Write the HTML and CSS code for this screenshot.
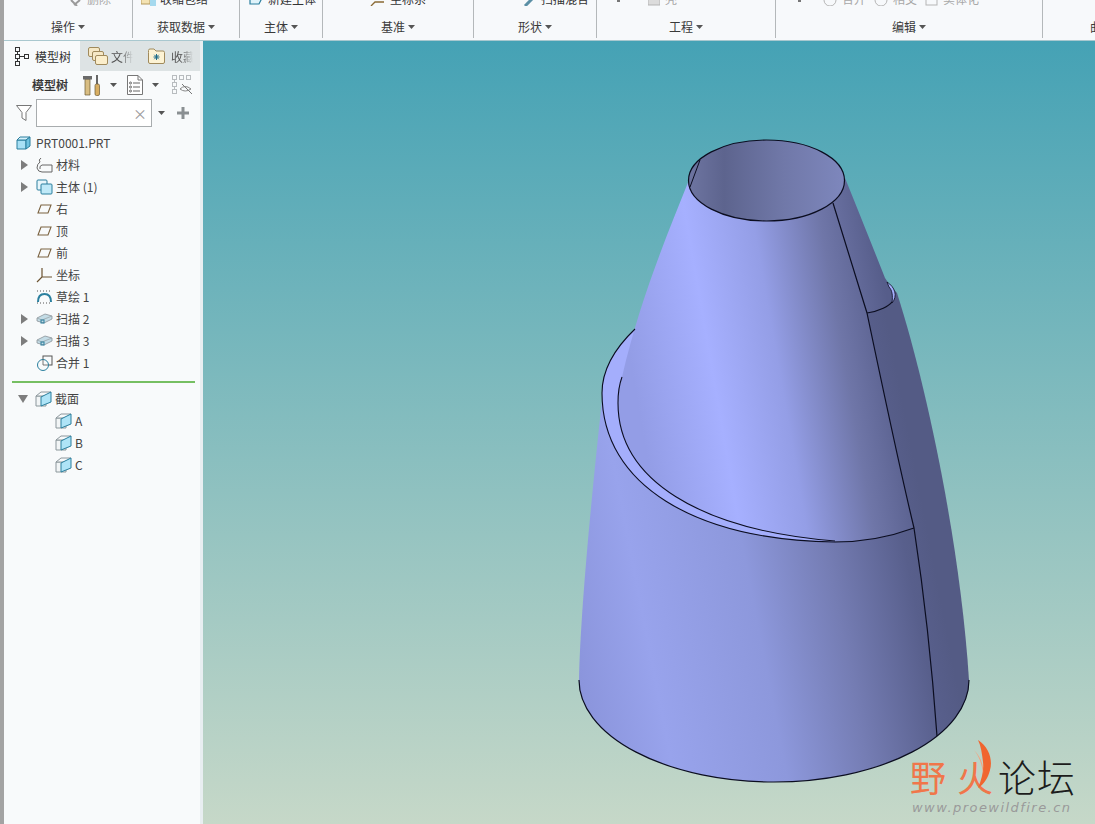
FILE: index.html
```html
<!DOCTYPE html>
<html lang="zh">
<head>
<meta charset="utf-8">
<title>模型树</title>
<link rel="stylesheet" href="styles.css">
</head>
<body>
<svg class="defs" width="0" height="0" aria-hidden="true">
  <defs>
    <symbol id="plane" viewBox="0 0 17 12"><path d="M5 2H15L12 10H2Z" fill="none" stroke="#7a6240" stroke-width="1.1"/></symbol>
    <symbol id="sweep" viewBox="0 0 17 14"><path d="M1 6L9 2L16 4V7L8 11L1 9Z" fill="#c3dce6" stroke="#8a9298" stroke-width=".8"/><path d="M1 6L6 8L16 4" fill="none" stroke="#9aa4aa" stroke-width=".8"/><rect x="5" y="8" width="3" height="3" fill="none" stroke="#2a7f9e"/></symbol>
    <symbol id="cut" viewBox="0 0 17 16"><path d="M1 5H11V15H1Z" fill="#f2f5f6" stroke="#8c979c"/><path d="M1 5L6 1H16L11 5Z" fill="#f7f9fa" stroke="#8c979c"/><path d="M6 6L16 1V11L6 15Z" fill="#aee4f7" stroke="#2a7f9e"/></symbol>
    <symbol id="arrow" viewBox="0 0 7 4"><path d="M0 0H7L3.5 4Z" fill="#555"/></symbol>
  </defs>
</svg>
<div class="app">
  <div class="strip"></div>
  <div class="content">
    <header class="ribbon">
      <section class="group g1">
        <div class="peek p1"><svg class="peek-ic" width="14" height="6" viewBox="0 0 14 6"><path d="M3 0L9 6M12 0L6 5" stroke="#9a9a9a" stroke-width="2" fill="none"/></svg><span class="dim">删除</span></div>
        <div class="glabel">操作<svg class="caret" width="7" height="4"><use href="#arrow"/></svg></div>
      </section>
      <section class="group g2">
        <div class="peek p2"><svg class="peek-ic" width="16" height="6" viewBox="0 0 16 6"><rect x="0" y="-2" width="9" height="6" fill="#f4e3b3" stroke="#b59a5c"/><rect x="9" y="0" width="6" height="6" fill="#a5d9ee"/></svg><span>收缩包络</span></div>
        <div class="glabel">获取数据<svg class="caret" width="7" height="4"><use href="#arrow"/></svg></div>
      </section>
      <section class="group g3">
        <div class="peek p3"><svg class="peek-ic" width="14" height="6" viewBox="0 0 14 6"><path d="M1 -2V4H10L13 -2" fill="#dff3fa" stroke="#2a7f9e" stroke-width="1.2"/></svg><span>新建主体</span></div>
        <div class="glabel">主体<svg class="caret" width="7" height="4"><use href="#arrow"/></svg></div>
      </section>
      <section class="group g4">
        <div class="peek p4"><svg class="peek-ic" width="15" height="6" viewBox="0 0 15 6"><path d="M1 6L5 2H14" stroke="#8a6a35" stroke-width="1.3" fill="none"/></svg><span>坐标系</span></div>
        <div class="glabel">基准<svg class="caret" width="7" height="4"><use href="#arrow"/></svg></div>
      </section>
      <section class="group g5">
        <div class="peek p5"><svg class="peek-ic" width="12" height="6" viewBox="0 0 12 6"><path d="M3 6L10 -1" stroke="#5a8fa5" stroke-width="3"/></svg><span>扫描混合</span></div>
        <div class="glabel">形状<svg class="caret" width="7" height="4"><use href="#arrow"/></svg></div>
      </section>
      <section class="group g6">
        <div class="peek p6"><span class="tick"></span><svg class="peek-ic" width="12" height="6" viewBox="0 0 12 6"><rect x="0" y="-3" width="12" height="8" fill="#dcdcdc" stroke="#b5b5b5"/></svg><span class="dim">壳</span></div>
        <div class="glabel">工程<svg class="caret" width="7" height="4"><use href="#arrow"/></svg></div>
      </section>
      <section class="group g7">
        <div class="peek p7"><span class="tick"></span><svg class="peek-ic" width="14" height="6" viewBox="0 0 14 6"><circle cx="7" cy="0" r="6" fill="none" stroke="#b5b5b5"/></svg><span class="dim">合并</span><svg class="peek-ic" width="14" height="6" viewBox="0 0 14 6"><circle cx="7" cy="0" r="6" fill="none" stroke="#b5b5b5"/></svg><span class="dim">相交</span><svg class="peek-ic" width="13" height="6" viewBox="0 0 13 6"><rect x="1" y="-4" width="11" height="9" fill="none" stroke="#b5b5b5"/></svg><span class="dim">实体化</span></div>
        <div class="glabel">编辑<svg class="caret" width="7" height="4"><use href="#arrow"/></svg></div>
      </section>
      <section class="group g8">
        <div class="peek"></div>
        <div class="glabel">曲面</div>
      </section>
    </header>

    <div class="main">
      <aside class="panel">
        <nav class="tabs">
          <div class="tab active">
            <svg width="14" height="19" viewBox="0 0 14 19"><g fill="none" stroke="#333" stroke-width="1"><rect x=".5" y=".5" width="4" height="4"/><rect x=".5" y="7.5" width="4" height="4"/><rect x=".5" y="14.5" width="4" height="4"/><rect x="9.5" y="7.5" width="4" height="4"/><path d="M2.5 4.500V7.500M2.500 11.500V14.500M4.500 9.500H9.500"/></g></svg>
            <span>模型树</span>
          </div>
          <div class="tab t2">
            <svg width="20" height="20" viewBox="0 0 20 20"><g fill="#f6e8c6" stroke="#a08a5c"><rect x=".5" y="1.500" width="11" height="9" rx="1.500"/><rect x="4.500" y="5.500" width="11" height="9" rx="1.500"/><rect x="7.500" y="9.500" width="12" height="9" rx="1.500" fill="#fbeecb"/></g></svg>
            <span class="fade">文件夹</span>
          </div>
          <div class="tab t3">
            <svg width="17" height="16" viewBox="0 0 17 16"><path d="M.5 4.500V2.500Q.5 1 2 1H6L8 3H15Q16.500 3 16.500 4.500V14Q16.500 15.500 15 15.500H2Q.5 15.500 .5 14Z" fill="#fdf3d4" stroke="#a08a5c"/><path d="M8.500 6V12M5.500 9H11.500M6.300 6.800L10.700 11.200M10.700 6.800L6.300 11.200" stroke="#1d6b8a" stroke-width="1"/></svg>
            <span class="fade">收藏夹</span>
          </div>
        </nav>
        <div class="toolbar">
          <span class="tool-title">模型树</span>
          <svg class="ic-tools" width="18" height="21" viewBox="0 0 18 21"><path d="M2 4H7V20H2Z" fill="#d8bd82" stroke="#6b5a35" stroke-width=".7"/><path d="M0 1H9V4.500H0Z" fill="#6a6a6a"/><rect x="13" y="0" width="2" height="9" fill="#666"/><rect x="12" y="9" width="4.500" height="11.500" rx="1.500" fill="#d8ae62" stroke="#6b5a35" stroke-width=".7"/></svg>
          <svg class="caret-t" width="7" height="4"><use href="#arrow"/></svg>
          <svg class="ic-doc" width="16" height="20" viewBox="0 0 16 20"><path d="M.5 .5H11L15.500 5V19.500H.5Z" fill="#fff" stroke="#777"/><path d="M11 .5V5H15.500" fill="none" stroke="#777"/><g stroke="#666"><path d="M6 8H13M6 12H13M6 16H13"/></g><g fill="none" stroke="#666"><circle cx="3.500" cy="8" r="1"/><circle cx="3.500" cy="12" r="1"/><circle cx="3.500" cy="16" r="1"/></g></svg>
          <svg class="caret-t" width="7" height="4"><use href="#arrow"/></svg>
          <svg class="ic-hide" width="21" height="20" viewBox="0 0 21 20"><g fill="none" stroke="#b8bcbf"><rect x=".5" y=".5" width="4" height="4"/><rect x=".5" y="7.500" width="4" height="4"/><rect x=".5" y="14.500" width="4" height="4"/><rect x="7.500" y=".5" width="4" height="4"/><rect x="14.500" y=".5" width="4" height="4"/><path d="M2.500 4.500V7.500M2.500 11.500V14.500"/></g><path d="M8 14Q13 9 19 14Q13 18 8 14Z" fill="none" stroke="#888"/><path d="M10 9L20 19" stroke="#777"/></svg>
        </div>
        <div class="filter">
          <svg class="funnel" width="16" height="16" viewBox="0 0 16 16"><path d="M.5 .5H15.500L10 7.500V15.500L6 13V7.500Z" fill="#fff" stroke="#777"/></svg>
          <div class="search"><span class="clear">×</span></div>
          <svg class="caret-f" width="7" height="4"><use href="#arrow"/></svg>
          <svg class="plus" width="12" height="12" viewBox="0 0 12 12"><path d="M6 0V12M0 6H12" stroke="#8a8f92" stroke-width="3"/></svg>
        </div>

        <div class="tree">
          <div class="row root"><svg class="ic" width="15" height="14" viewBox="0 0 15 14"><path d="M1 4H10V13H1Z" fill="#a8e0f5" stroke="#2a7f9e"/><path d="M1 4L4 1H14L10 4Z" fill="#d6f1fb" stroke="#2a7f9e"/><path d="M10 4L14 1V10L10 13Z" fill="#6fc2e0" stroke="#2a7f9e"/></svg><span>PRT0001.PRT</span></div>
          <div class="row"><i class="twist"></i><svg class="ic" width="17" height="16" viewBox="0 0 17 16"><path d="M5 1Q2 3 4 5Q1 7 1 11Q2 15 6 15H16V8H6Q3 9 4 12" fill="none" stroke="#666"/></svg><span>材料</span></div>
          <div class="row"><i class="twist"></i><svg class="ic" width="17" height="16" viewBox="0 0 17 16"><rect x="1" y="1" width="10" height="10" rx="1" fill="#e8f6fb" stroke="#2a7f9e"/><rect x="5" y="5" width="11" height="10" rx="1" fill="#bfe9f8" stroke="#2a7f9e"/></svg><span>主体 (1)</span></div>
          <div class="row"><b class="blank"></b><svg class="ic" width="17" height="12"><use href="#plane"/></svg><span>右</span></div>
          <div class="row"><b class="blank"></b><svg class="ic" width="17" height="12"><use href="#plane"/></svg><span>顶</span></div>
          <div class="row"><b class="blank"></b><svg class="ic" width="17" height="12"><use href="#plane"/></svg><span>前</span></div>
          <div class="row"><b class="blank"></b><svg class="ic" width="17" height="16" viewBox="0 0 17 16"><path d="M6 1V10L1 15M6 10H16" fill="none" stroke="#6b5230" stroke-width="1.200"/></svg><span>坐标</span></div>
          <div class="row"><b class="blank"></b><svg class="ic" width="17" height="14" viewBox="0 0 17 14"><path d="M2 12Q2 4 8.500 4T15 12" fill="none" stroke="#2a7f9e" stroke-width="2"/><path d="M1 1H16M1 13H16" stroke="#555" stroke-dasharray="1 2"/></svg><span>草绘 1</span></div>
          <div class="row"><i class="twist"></i><svg class="ic" width="17" height="14"><use href="#sweep"/></svg><span>扫描 2</span></div>
          <div class="row"><i class="twist"></i><svg class="ic" width="17" height="14"><use href="#sweep"/></svg><span>扫描 3</span></div>
          <div class="row"><b class="blank"></b><svg class="ic" width="17" height="16" viewBox="0 0 17 16"><rect x="7" y="1" width="9" height="9" fill="none" stroke="#555"/><circle cx="7" cy="10" r="5.500" fill="#f8fafb" stroke="#2a7f9e"/><path d="M7 4.500V10H12" fill="none" stroke="#555" stroke-width=".8"/></svg><span>合并 1</span></div>
          <div class="sep"></div>
          <div class="row"><i class="twist open"></i><svg class="ic" width="17" height="16"><use href="#cut"/></svg><span>截面</span></div>
          <div class="row child"><svg class="ic" width="17" height="16"><use href="#cut"/></svg><span>A</span></div>
          <div class="row child"><svg class="ic" width="17" height="16"><use href="#cut"/></svg><span>B</span></div>
          <div class="row child"><svg class="ic" width="17" height="16"><use href="#cut"/></svg><span>C</span></div>
        </div>
      </aside>
      <div class="divider"></div>

      <main class="viewport">
        <svg class="model" viewBox="203 41 892 783" width="892" height="783">
          <defs>
            <linearGradient id="low" gradientUnits="userSpaceOnUse" x1="580" y1="680" x2="943" y2="610">
              <stop offset="0" stop-color="#8b95dc"/><stop offset=".2" stop-color="#98a3ec"/><stop offset=".5" stop-color="#8d98dc"/><stop offset=".72" stop-color="#757db4"/><stop offset=".93" stop-color="#585f8c"/><stop offset="1" stop-color="#545b85"/>
            </linearGradient>
            <linearGradient id="up" gradientUnits="userSpaceOnUse" x1="625" y1="330" x2="885" y2="285">
              <stop offset="0" stop-color="#939de6"/><stop offset=".3" stop-color="#a6b0ff"/><stop offset=".55" stop-color="#949ee6"/><stop offset=".8" stop-color="#6f76a8"/><stop offset="1" stop-color="#565d8a"/>
            </linearGradient>
            <linearGradient id="hole" gradientUnits="userSpaceOnUse" x1="690" y1="180" x2="845" y2="180">
              <stop offset="0" stop-color="#6d74a0"/><stop offset=".22" stop-color="#5d648e"/><stop offset=".6" stop-color="#7078a8"/><stop offset="1" stop-color="#7e87bd"/>
            </linearGradient>
          </defs>
          <!-- lower body -->
          <path d="M579 680C580 620 590 510 602 400L635 329L887 282L897 293C925 380 960 540 969 680A195 102 0 0 1 579 680Z" fill="url(#low)"/>
          <path d="M579 680A195 102 0 0 0 969 680" fill="none" stroke="#0b0d20" stroke-width="1.200"/>
          <!-- left crescent of the ring -->
          <path d="M635 329C613 350 602 372 602 393C602 485 695 540 835 542L760 400Z" fill="#a4aefc"/>
          <!-- upper body -->
          <path d="M689 180C665 240 640 300 622 377C619 385 618 395 618 403C618 480 700 530 835 541C870 542 895 535 914 528C900 470 880 375 867 313C880 310 888 306 892 300C893 293 890 285 885 278C870 240 858 210 845 178Z" fill="url(#up)"/>
          <!-- edges of the ring -->
          <path d="M635 329C613 350 602 372 602 393C602 485 695 540 835 542C870 542 895 535 914 528" fill="none" stroke="#0b0d20" stroke-width="1.100"/>
          <path d="M622 377C619 385 618 395 618 403C618 480 700 530 835 541" fill="none" stroke="#0b0d20" stroke-width="1.100"/>
          <path d="M867 313C880 311 889 306 892 302" fill="none" stroke="#0b0d20" stroke-width="1.200"/>
          <path d="M887 282C895 287 898 296 892 303C893 295 892 290 889 287Z" fill="#a4aefc" stroke="#0b0d20" stroke-width=".8"/>
          <!-- opening -->
          <ellipse cx="766.500" cy="180.500" rx="78" ry="40.500" fill="url(#hole)" stroke="#0b0d20" stroke-width="1.200"/>
          <path d="M700 160L690 187" fill="none" stroke="#0b0d20" stroke-width="1"/>
          <!-- seam -->
          <path d="M833 203L867 313C880 375 900 470 914 528C925 600 933 680 937 736" fill="none" stroke="#0b0d20" stroke-width="1.200"/>
        </svg>
        <div class="logo">
          <div class="logo-main"><span class="orange a">野</span><span class="orange b">火</span><span class="dark">论坛</span></div>
          <svg class="flame" width="24" height="52" viewBox="0 0 24 52"><path d="M8 2C19 9 23 22 20 32C18 40 14 46 8 50C12 40 14 32 13 24C12 16 11 8 8 2Z" fill="#f0652f"/><path d="M4 12C10 18 14 26 13 36C12 26 9 18 4 12Z" fill="#f5a27e"/></svg>
          <div class="logo-url">www.proewildfire.cn</div>
        </div>
      </main>
    </div>
  </div>
</div>
</body>
</html>
```

FILE: styles.css
```css
* { box-sizing: border-box; }
html, body { margin: 0; height: 100%; overflow: hidden; }
body { font-family: "Noto Sans CJK SC", "Noto Sans", sans-serif; font-size: 12px; color: #444; background: #f8fafb; }
.defs { position: absolute; }
svg { display: block; flex: none; }

.app { display: flex; width: 1095px; height: 824px; }
.strip { width: 4px; background: #a3a3a3; flex: none; }
.content { flex: 1; display: flex; flex-direction: column; min-width: 0; }

.ribbon { display: flex; height: 41px; background: #f7f9fb; border-bottom: 1px solid #a9c8cf; overflow: hidden; flex: none; }
.group { display: flex; flex-direction: column; height: 38px; border-right: 1px solid #b4b8ba; flex: none; }
.g1 { width: 129px; } .g2 { width: 107px; } .g3 { width: 83px; } .g4 { width: 151px; }
.g5 { width: 123px; } .g6 { width: 179px; } .g7 { width: 267px; }
.g8 { flex: 1; border-right: 0; width: 100px; }
.peek { height: 6px; margin-bottom: 3px; display: flex; align-items: flex-end; overflow: hidden; font-size: 12px; line-height: 17px; color: #333; white-space: nowrap; }
.peek > span { margin-bottom: -1px; }
.peek-ic { align-self: flex-start; margin-right: 5px; }
.dim { color: #a8a8a8; }
.tick { width: 3px; height: 2px; background: #777; align-self: flex-start; margin-right: 25px; }
.p1 { padding-left: 64px; } .p2 { padding-left: 8px; } .p3 { padding-left: 9px; }
.p4 { padding-left: 47px; } .p5 { padding-left: 48px; } .p6 { padding-left: 20px; } .p7 { padding-left: 22px; }
.p2 .peek-ic { margin-right: 3px; }
.p5 .peek-ic { margin-right: 7px; }
.p6 .tick { margin-right: 28px; }
.p7 .dim { margin-right: 8px; }
.p7 .tick { margin-right: 22px; }
.glabel { height: 29px; padding-top: 6px; display: flex; justify-content: center; align-items: center; gap: 3px; color: #3a3a3a; line-height: 18px; white-space: nowrap; }
.g8 .glabel { justify-content: flex-start; padding-left: 47px; }

.main { flex: 1; display: flex; min-height: 0; }
.panel { width: 196px; flex: none; background: #f8fafb; display: flex; flex-direction: column; }
.divider { width: 3px; flex: none; background: #e8eef1; }

.tabs { height: 30px; display: flex; flex: none; background: #dde3e4; }
.tab { display: flex; align-items: center; height: 30px; color: #333; }
.tab.active { width: 76px; background: #f8fafb; padding-left: 11px; gap: 6px; }
.t2 { width: 60px; padding-left: 8px; gap: 3px; }
.t3 { padding-left: 8px; gap: 6px; }
.fade { width: 22px; overflow: hidden; white-space: nowrap; color: #555; -webkit-mask-image: linear-gradient(90deg, #000 45%, transparent 100%); mask-image: linear-gradient(90deg, #000 45%, transparent 100%); }

.toolbar { height: 28px; display: flex; align-items: center; flex: none; padding-left: 28px; }
.tool-title { width: 51px; color: #333; font-weight: 500; -webkit-text-stroke: .2px #333; margin-bottom: 2px; }
.caret-t { margin-left: 9px; margin-right: 10px; }
.ic-hide { margin-left: 3px; }
.filter { height: 28px; display: flex; align-items: center; flex: none; }
.funnel { margin-left: 12px; margin-right: 4px; }
.search { width: 116px; height: 28px; background: #fff; border: 1px solid #a8acae; display: flex; align-items: center; justify-content: flex-end; padding-right: 4px; }
.clear { font-size: 14px; line-height: 15px; color: #9a9a9a; }
.caret-f { margin-left: 6px; }
.plus { margin-left: 12px; }

.tree { padding-top: 5px; }
.row { display: flex; align-items: center; height: 22px; padding-left: 16px; color: #444; white-space: nowrap; }
.row span { margin-left: 3px; margin-bottom: 2px; }
.twist { width: 0; height: 0; margin-right: 8px; border-left: 7px solid #7d7d7d; border-top: 5px solid transparent; border-bottom: 5px solid transparent; margin-left: 1px; }
.twist.open { margin-left: -2px; margin-right: 7px; border-left: 5px solid transparent; border-right: 5px solid transparent; border-top: 8px solid #7d7d7d; border-bottom: 0; }
.blank { width: 16px; flex: none; }
.ic { width: 17px; }
.root { padding-left: 12px; }
.root .ic { width: 15px; }
.root span { margin-left: 5px; }
.child { padding-left: 51px; }
.sep { height: 2px; margin: 7px 5px 5px 8px; background: #76bf62; }

.viewport { flex: 1; position: relative; overflow: hidden; background: linear-gradient(180deg, #45a2b5 0%, #c6d8c8 100%); }
.model { position: absolute; left: 0; top: 0; }
.logo { position: absolute; left: 707px; top: 695px; width: 172px; height: 88px; }
.flame { position: absolute; left: 60px; top: 2px; }
.logo-main { position: absolute; left: 0; top: 18px; display: flex; line-height: 44px; font-size: 36px; white-space: nowrap; }
.orange { color: #f0764a; }
.orange.a { width: 47px; }
.orange.b { width: 41px; }
.dark { color: #1c1c1c; font-size: 38px; font-weight: 300; letter-spacing: 1px; }
.logo-url { position: absolute; left: 2px; top: 64px; font-family: "DejaVu Sans", sans-serif; font-style: italic; font-size: 13px; letter-spacing: 1.45px; color: #9a9a9a; white-space: nowrap; }
```
